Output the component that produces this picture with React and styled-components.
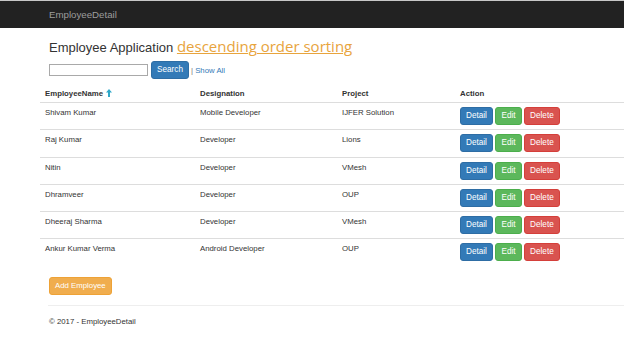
import styled, { createGlobalStyle } from 'styled-components';

const employees = [
    { name: 'Shivam Kumar', designation: 'Mobile Developer', project: 'IJFER Solution' },
    { name: 'Raj Kumar', designation: 'Developer', project: 'Lions' },
    { name: 'Nitin', designation: 'Developer', project: 'VMesh' },
    { name: 'Dhramveer', designation: 'Developer', project: 'OUP' },
    { name: 'Dheeraj Sharma', designation: 'Developer', project: 'VMesh' },
    { name: 'Ankur Kumar Verma', designation: 'Android Developer', project: 'OUP' },
];

const colors = {
    primary: ['#337ab7', '#2e6da4'],
    success: ['#5cb85c', '#4cae4c'],
    danger: ['#d9534f', '#d43f3a'],
    warning: ['#f0ad4e', '#eea236'],
};

const SortArrow = () => (
    <svg width="6" height="8" viewBox="0 0 6 8">
        <path d="M3 0 L6 3.4 L4 3.4 L4 8 L2 8 L2 3.4 L0 3.4 Z" fill="#2fa8c9" />
    </svg>
);

const App = () => {
    return (
        <>
            <GlobalStyle />
            <Navbar>
                <Brand>EmployeeDetail</Brand>
            </Navbar>
            <Page>
                <Title>
                    Employee Application <SortLink href="#">descending order sorting</SortLink>
                </Title>
                <SearchRow>
                    <SearchInput type="text" />
                    <Btn $variant="primary">Search</Btn>
                    <ShowAll>
                        <Pipe>|</Pipe> <a href="#">Show All</a>
                    </ShowAll>
                </SearchRow>

                <Table>
                    <colgroup>
                        <col style={{ width: 155 }} />
                        <col style={{ width: 142 }} />
                        <col style={{ width: 118 }} />
                        <col />
                    </colgroup>
                    <thead>
                        <tr>
                            <Th>EmployeeName <SortArrow /></Th>
                            <Th>Designation</Th>
                            <Th>Project</Th>
                            <Th>Action</Th>
                        </tr>
                    </thead>
                    <tbody>
                        {employees.map((e, i) => (
                            <tr key={i}>
                                <Td>{e.name}</Td>
                                <Td>{e.designation}</Td>
                                <Td>{e.project}</Td>
                                <ActionCell>
                                    <Actions>
                                        <Btn $variant="primary">Detail</Btn>
                                        <Btn $variant="success">Edit</Btn>
                                        <Btn $variant="danger">Delete</Btn>
                                    </Actions>
                                </ActionCell>
                            </tr>
                        ))}
                    </tbody>
                </Table>

                <AddRow>
                    <Btn $variant="warning" $size="7.8px">Add Employee</Btn>
                </AddRow>
                <Rule />
                <Footer>© 2017 - EmployeeDetail</Footer>
            </Page>
        </>
    );
};

export default App;

const GlobalStyle = createGlobalStyle`
    body {
        margin: 0;
        background: #fff;
        font-family: "Liberation Sans", Arial, sans-serif;
        color: #333;
        overflow: hidden;
    }
`;

const Navbar = styled.div`
    height: 27px;
    border-top: 1px solid #c8c8c8;
    background: #222;
    display: flex;
    align-items: center;
    padding-left: 49px;
`;

const Brand = styled.span`
    color: #9d9d9d;
    font-size: 9.7px;
`;

const Page = styled.div`
    padding-left: 40px;
`;

const Title = styled.h2`
    margin: 0;
    padding: 9px 0 0 9px;
    font-size: 13px;
    font-weight: normal;
    line-height: 18px;
    color: #333;
`;

const SortLink = styled.a`
    font-family: "Open Sans", "DejaVu Sans", sans-serif;
    font-size: 15px;
    color: #e8a43d;
    text-decoration: underline;
    text-decoration-thickness: 1px;
`;

const SearchRow = styled.div`
    display: flex;
    align-items: center;
    padding-left: 9px;
    margin-top: 4px;
    height: 18px;
`;

const SearchInput = styled.input`
    box-sizing: border-box;
    width: 99px;
    height: 12px;
    border: 1px solid #a9a9a9;
    padding: 0;
    margin: 0 3px 0 0;
`;

const Btn = styled.button`
    box-sizing: border-box;
    height: 18px;
    padding: 0 5px;
    font-family: "Liberation Sans", Arial, sans-serif;
    font-size: ${p => p.$size || '8.2px'};
    color: #fff;
    background: ${p => colors[p.$variant][0]};
    border: 1px solid ${p => colors[p.$variant][1]};
    border-radius: 3px;
    line-height: 16px;
`;

const ShowAll = styled.span`
    font-size: 7.8px;
    margin-left: 2px;
    a {
        color: #337ab7;
        text-decoration: none;
    }
`;

const Pipe = styled.span`
    color: #777;
`;

const Table = styled.table`
    margin-top: 1px;
    width: 100%;
    table-layout: fixed;
    border-collapse: collapse;
    font-size: 7.8px;
`;

const Th = styled.th`
    text-align: left;
    font-weight: bold;
    height: 18px;
    padding: 0 5px 4px;
    vertical-align: bottom;
    border-bottom: 1px solid #ddd;
    white-space: nowrap;
    svg {
        margin-left: 1px;
        vertical-align: -1px;
    }
`;

const Td = styled.td`
    box-sizing: border-box;
    height: 27.3px;
    padding: 4px 5px 0;
    vertical-align: top;
    border-top: 1px solid #ddd;
    line-height: 11px;
`;

const ActionCell = styled(Td)`
    padding-top: 4px;
`;

const Actions = styled.div`
    display: flex;
    gap: 2.5px;
`;

const AddRow = styled.div`
    padding: 8px 0 0 9px;
`;

const Rule = styled.hr`
    margin: 10px 0 0 8px;
    border: 0;
    border-top: 1px solid #eee;
`;

const Footer = styled.p`
    margin: 11px 0 0 9px;
    font-size: 7.8px;
`;
